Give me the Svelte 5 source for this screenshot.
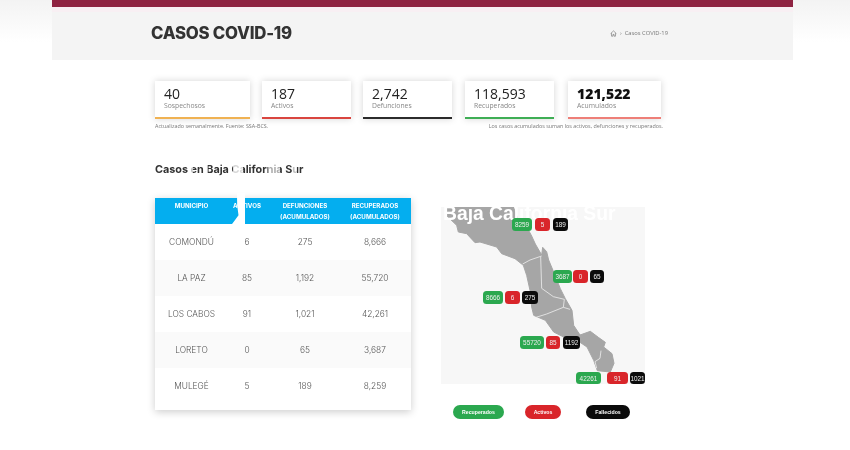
<script>
  const cards = [
    { n: '40', l: 'Sospechosos', w: 95, c: '#f0b253' },
    { n: '187', l: 'Activos', w: 89, c: '#d9453f' },
    { n: '2,742', l: 'Defunciones', w: 89, c: '#2b2b2b' },
    { n: '118,593', l: 'Recuperados', w: 89, c: '#3fae55' },
    { n: '121,522', l: 'Acumulados', w: 93, c: '#ee7f78', strong: true }
  ];
  const rows = [
    ['COMONDÚ', '6', '275', '8,666'],
    ['LA PAZ', '85', '1,192', '55,720'],
    ['LOS CABOS', '91', '1,021', '42,261'],
    ['LORETO', '0', '65', '3,687'],
    ['MULEGÉ', '5', '189', '8,259']
  ];
  const pins = [
    { x: 71, y: 11, h: 13, g: ['8259', 20], r: ['5', 15], b: ['189', 15], gr: 3, br: 3 },
    { x: 112, y: 63, h: 13, g: ['3687', 19], r: ['0', 15], b: ['65', 14], gr: 1, br: 2 },
    { x: 42, y: 84, h: 13, g: ['8666', 20], r: ['6', 15], b: ['275', 16], gr: 2, br: 2 },
    { x: 79, y: 129, h: 13, g: ['55720', 24], r: ['85', 14], b: ['1192', 17], gr: 2, br: 3 },
    { x: 135, y: 165, h: 12, g: ['42261', 25], r: ['91', 21], b: ['1021', 15], gr: 6, br: 2 }
  ];
</script>

<div class="page">
  <header class="head">
    <div class="bar"></div>
    <div class="strip"></div>
    <div class="head-in">
      <h1>CASOS COVID-19</h1>
      <nav class="crumb">
        <svg viewBox="0 0 12 12" width="7" height="7" fill="none" stroke="#777" stroke-width="1.1">
          <path d="M1 6.2 6 1.6l5 4.6M2.6 5.2V10.6h2.5V7.6h1.8v3h2.5V5.2" />
        </svg>
        <span class="sep">›</span>
        <span>Casos COVID-19</span>
      </nav>
    </div>
  </header>

  <main class="main">
    <section class="cards">
      {#each cards as c}
        <div class="card" style="width:{c.w}px;border-color:{c.c}">
          <b class:strong={c.strong}>{c.n}</b>
          <span>{c.l}</span>
        </div>
      {/each}
    </section>
    <div class="notes">
      <span>Actualizado semanalmente. Fuente: SSA-BCS.</span>
      <span>Los casos acumulados suman los activos, defunciones y recuperados.</span>
    </div>

    <h2>Casos en Baja California Sur</h2>

    <div class="split">
      <div class="table">
        <div class="row th">
          <span>MUNICIPIO</span>
          <span>ACTIVOS</span>
          <span>DEFUNCIONES<br />(ACUMULADOS)</span>
          <span>RECUPERADOS<br />(ACUMULADOS)</span>
        </div>
        {#each rows as r}
          <div class="row td">
            {#each r as v}<span>{v}</span>{/each}
          </div>
        {/each}
        <i class="streak"></i>
      </div>

      <div class="right">
        <div class="map">
          <svg viewBox="33 21 612 531" width="204" height="177">
            <path fill="#a6a6a6" stroke="#a6a6a6" stroke-width="3" stroke-linejoin="round" d="M48 21 L250 21 L262 52 L290 80 L305 108 L316 132 L335 165 L338 142 L350 155 L356 180 L371 216 L391 266 L406 296 L426 331 L431 376 L450 405 L481 394 L505 412 L526 427 L521 441 L546 461 L552 490 L541 516 L502 512 L491 481 L471 441 L441 421 L401 411 L371 396 L346 361 L311 346 L305 321 L300 271 L290 226 L280 196 L255 176 L215 161 L200 141 L150 126 L135 128 L110 101 L85 96 L80 76 L48 45 Z" />
            <path fill="none" stroke="#ececec" stroke-width="2.5" stroke-linejoin="round" d="M278 192 L300 180 L335 168 M332 170 L335 265 L370 290 L403 298 L400 322 L350 342 L318 352 M400 322 L420 328 M513 452 L510 475 L495 485 L500 505" />
          </svg>
          <div class="title">Baja California Sur</div>
          {#each pins as p}
            <div class="pin" style="left:{p.x}px;top:{p.y}px;height:{p.h}px">
              <span class="g" style="width:{p.g[1]}px;margin-right:{p.gr}px">{p.g[0]}</span>
              <span class="r" style="width:{p.r[1]}px;margin-right:{p.br}px">{p.r[0]}</span>
              <span class="b" style="width:{p.b[1]}px">{p.b[0]}</span>
            </div>
          {/each}
        </div>
        <div class="legend">
          <span class="g l1">Recuperados</span>
          <span class="r l2">Activos</span>
          <span class="b l3">Fallecidos</span>
        </div>
      </div>
    </div>
  </main>
</div>

<style>
  :global(body) {
    margin: 0;
    background: #fff;
  }
  .page {
    width: 850px;
    height: 450px;
    overflow: hidden;
    position: relative;
    background: linear-gradient(#f3f3f3, #fff 42px);
    font-family: 'Open Sans', sans-serif;
    filter: blur(0.35px);
  }
  .head {
    width: 741px;
    margin-left: 52px;
    height: 60px;
    background: #f4f4f4;
  }
  .bar {
    height: 7px;
    background: #8f2342;
  }
  .strip {
    height: 5px;
    background: #f8eff3;
  }
  .head-in {
    height: 48px;
    padding: 0 125px 0 99px;
    box-sizing: border-box;
    display: flex;
    align-items: center;
    justify-content: space-between;
    position: relative;
    top: -3px;
  }
  h1 {
    margin: 0;
    font: 800 16.8px Inter, sans-serif;
    letter-spacing: -0.25px;
    color: #333;
  }
  .crumb {
    display: flex;
    align-items: center;
    gap: 3px;
    font-size: 5.8px;
    color: #777;
  }
  .main {
    background: #fff;
    padding: 21px 0 0 155px;
  }
  .cards {
    display: flex;
    gap: 12px;
  }
  .card:nth-child(4) {
    margin-left: 1px;
  }
  .card:nth-child(5) {
    margin-left: 2px;
  }
  .card {
    height: 38px;
    box-sizing: border-box;
    background: #fff;
    border-bottom: 2px solid;
    box-shadow: 0 0 7px rgba(0, 0, 0, 0.17);
    padding: 5px 9px 0;
    display: flex;
    flex-direction: column;
  }
  .card b {
    font-size: 14px;
    line-height: 16px;
    font-weight: 500;
    color: #222;
  }
  .card b.strong {
    font-weight: 800;
    color: #111;
  }
  .card span {
    font-size: 6.8px;
    line-height: 7px;
    color: #888;
  }
  .notes {
    width: 508px;
    display: flex;
    justify-content: space-between;
    font-size: 5.4px;
    line-height: 8px;
    color: #777;
    margin-top: 3px;
  }
  h2 {
    margin: 33px 0 0;
    width: 200px;
    font: 700 10.8px/14px Inter, sans-serif;
    color: #333;
    -webkit-mask-image: linear-gradient(90deg, #000 33px, rgba(0,0,0,.3) 33px, rgba(0,0,0,.3) 38px, #000 38px, #000 50px, rgba(0,0,0,.3) 50px, rgba(0,0,0,.3) 53px, #000 53px, #000 78px, rgba(0,0,0,.2) 78px, rgba(0,0,0,.2) 88px, #000 88px, #000 113px, rgba(0,0,0,.4) 113px, rgba(0,0,0,.4) 125px, #000 125px, #000 137px, rgba(0,0,0,.3) 137px, rgba(0,0,0,.3) 142px, #000 142px);
    mask-image: linear-gradient(90deg, #000 33px, rgba(0,0,0,.3) 33px, rgba(0,0,0,.3) 38px, #000 38px, #000 50px, rgba(0,0,0,.3) 50px, rgba(0,0,0,.3) 53px, #000 53px, #000 78px, rgba(0,0,0,.2) 78px, rgba(0,0,0,.2) 88px, #000 88px, #000 113px, rgba(0,0,0,.4) 113px, rgba(0,0,0,.4) 125px, #000 125px, #000 137px, rgba(0,0,0,.3) 137px, rgba(0,0,0,.3) 142px, #000 142px);
  }
  .split {
    display: flex;
    margin-top: 21px;
    gap: 30px;
  }
  .table {
    width: 256px;
    position: relative;
    box-shadow: 0 2px 8px rgba(0, 0, 0, 0.2);
    background: #fff;
  }
  .row {
    display: grid;
    grid-template-columns: 73px 38px 78px 62px;
    text-align: center;
    align-items: center;
  }
  .th {
    height: 26px;
    padding-top: 2px;
    box-sizing: border-box;
    align-items: start;
    background: #04aeef;
    color: #fff;
    font: 700 6.2px/11px Inter, sans-serif;
  }
  .td {
    height: 36px;
    font: 300 8.4px Inter, sans-serif;
    color: #555;
  }
  .td:nth-child(odd) {
    background: #fafafa;
  }
  .streak {
    position: absolute;
    left: 77px;
    top: -5px;
    width: 13px;
    height: 31px;
    background: #fff;
    clip-path: polygon(38% 0, 100% 0, 100% 100%, 0 100%, 15% 92%, 50% 72%, 40% 40%);
  }
  .right {
    width: 204px;
    position: relative;
    top: 9px;
  }
  .map {
    position: relative;
    width: 204px;
    height: 177px;
    background: #f7f7f7;
  }
  .map svg {
    display: block;
  }
  .title {
    position: absolute;
    left: 2px;
    top: -3px;
    color: #fff;
    font: 700 19.3px/20px 'Liberation Sans', sans-serif;
    white-space: nowrap;
  }
  .pin {
    position: absolute;
    display: flex;
    font: 400 6.4px 'Liberation Sans', sans-serif;
    text-align: center;
    color: #eee;
  }
  .pin span {
    border-radius: 3.5px;
    display: flex;
    align-items: center;
    justify-content: center;
  }
  .g {
    background: #2ba84f;
  }
  .r {
    background: #d9252a;
  }
  .b {
    background: #0b0b0b;
  }
  .legend {
    display: flex;
    margin: 21px 0 0 12px;
    font: 700 5.2px 'Liberation Sans', sans-serif;
    color: #fff;
  }
  .legend span {
    height: 14px;
    border-radius: 7px;
    display: flex;
    align-items: center;
    justify-content: center;
  }
  .l1 {
    width: 51px;
    margin-right: 21px;
  }
  .l2 {
    width: 36px;
    margin-right: 25px;
  }
  .l3 {
    width: 44px;
  }
</style>
